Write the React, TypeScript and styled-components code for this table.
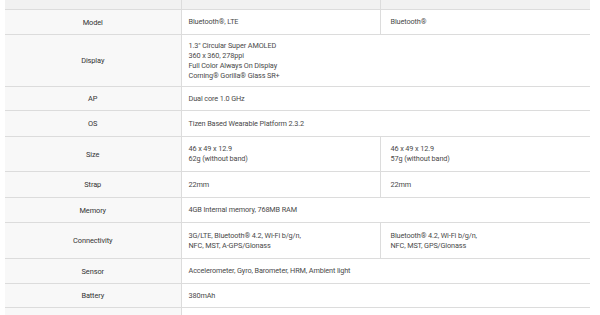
import styled, { createGlobalStyle } from "styled-components";

type Spec = {
    label: string;
    h: number;
    lte: string[];
    bt?: string[];
};

const specs: Spec[] = [
    { label: "Model", h: 25, lte: ["Bluetooth®, LTE"], bt: ["Bluetooth®"] },
    {
        label: "Display", h: 52, lte: [
            "1.3\" Circular Super AMOLED",
            "360 x 360, 278ppi",
            "Full Color Always On Display",
            "Corning® Gorilla® Glass SR+",
        ]
    },
    { label: "AP", h: 24, lte: ["Dual core 1.0 GHz"] },
    { label: "OS", h: 26, lte: ["Tizen Based Wearable Platform 2.3.2"] },
    { label: "Size", h: 35, lte: ["46 x 49 x 12.9", "62g (without band)"], bt: ["46 x 49 x 12.9", "57g (without band)"] },
    { label: "Strap", h: 26, lte: ["22mm"], bt: ["22mm"] },
    { label: "Memory", h: 25, lte: ["4GB Internal memory, 768MB RAM"] },
    {
        label: "Connectivity", h: 36,
        lte: ["3G/LTE, Bluetooth® 4.2, Wi-Fi b/g/n,", "NFC, MST, A-GPS/Glonass"],
        bt: ["Bluetooth® 4.2, Wi-Fi b/g/n,", "NFC, MST, GPS/Glonass"]
    },
    { label: "Sensor", h: 25, lte: ["Accelerometer, Gyro, Barometer, HRM, Ambient light"] },
    { label: "Battery", h: 24, lte: ["380mAh"] },
    { label: "", h: 24, lte: [""] },
];

export default function App() {
    return <>
        <Global />
        <Page>
            <Table>
                <colgroup>
                    <col style={{ width: 176 }} />
                    <col style={{ width: 199 }} />
                    <col style={{ width: 210 }} />
                </colgroup>
                <tbody>
                    <HeadRow>
                        <HeadCell />
                        <HeadCell />
                        <HeadCell />
                    </HeadRow>
                    {specs.map((item, key) => <Row key={key} h={item.h}>
                        <Label>{item.label}</Label>
                        <Value colSpan={item.bt ? 1 : 2}>
                            {item.lte.map((line, i) => <div key={i}>{line}</div>)}
                        </Value>
                        {item.bt && <Value wide>
                            {item.bt.map((line, i) => <div key={i}>{line}</div>)}
                        </Value>}
                    </Row>)}
                </tbody>
            </Table>
        </Page>
    </>
}

const Global = createGlobalStyle`
    body {
        margin: 0;
        background: #fff;
        font-family: Roboto, "Liberation Sans", sans-serif;
    }
`
const Page = styled.div`
    width: 600px;
    height: 315px;
    overflow: hidden;
    padding-left: 5px;
    box-sizing: border-box;
`
const Table = styled.table`
    width: 585px;
    border-collapse: collapse;
    table-layout: fixed;
    margin-top: -1px;
`
const HeadRow = styled.tr`
    height: 10px;
    background: #f1f1f1;
`
const HeadCell = styled.td`
    padding: 0;
    border-bottom: 1px solid #dcdcdc;
    & + & {
        border-left: 1px solid #dcdcdc;
    }
`
const Row = styled.tr<{ h: number }>`
    height: ${props => props.h}px;
    border-bottom: 1px solid #dcdcdc;
`
const Label = styled.td`
    background: #f8f8f8;
    color: #333;
    font-size: 7.4px;
    letter-spacing: -0.1px;
    text-align: center;
    vertical-align: middle;
    padding: 1px 0 0;
    border-right: 1px solid #dcdcdc;
`
const Value = styled.td<{ wide?: boolean }>`
    color: #4a4a4a;
    font-size: 7.3px;
    letter-spacing: -0.12px;
    line-height: 10px;
    vertical-align: middle;
    padding: 1px 0 0 ${props => props.wide ? 10 : 7}px;
    border-left: ${props => props.wide ? "1px solid #dcdcdc" : "none"};
    white-space: nowrap;
`
